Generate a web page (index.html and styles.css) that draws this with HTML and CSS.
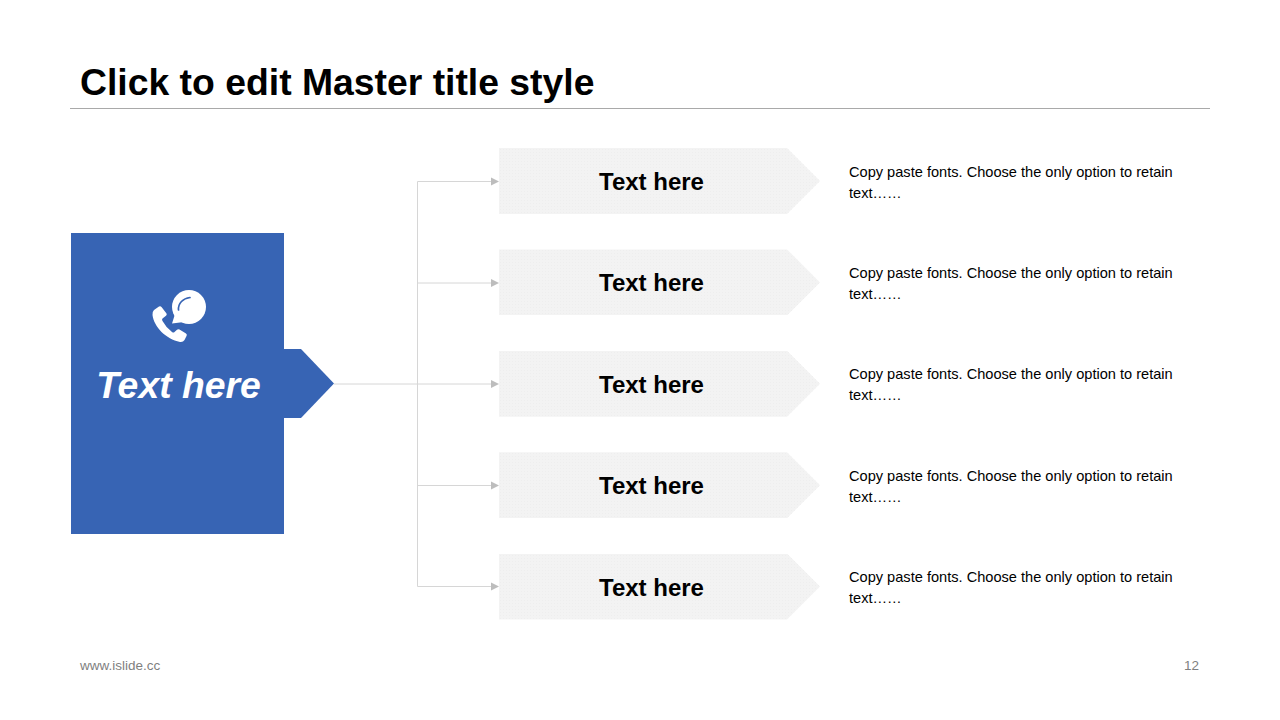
FILE: index.html
```html
<!DOCTYPE html>
<html lang="en">
<head>
<meta charset="utf-8">
<title>Click to edit Master title style</title>
<link rel="stylesheet" href="styles.css">
</head>
<body>
<div class="slide">
  <header class="header"><h1 class="title">Click to edit Master title style</h1></header>
  <main class="main">
    <section class="lead">
      <div class="lead-card">
        <svg class="lead-icon" width="58" height="58" viewBox="0 0 58 58" aria-hidden="true">
          <circle class="icon-fill" cx="39" cy="18" r="17"/>
          <polygon class="icon-fill" points="25,25 22,34.5 34,33"/>
          <path class="icon-arc" d="M28.500 21C28 14 33 9.500 40 8.500"/>
          <path class="icon-fill" d="M4 21L9 17.500Q10.500 16.700 11.500 18L16.500 24.500Q17.200 25.700 16 26.700L12.500 29.500Q11.500 30.500 12.500 32Q16 38.500 22 43Q23.500 44.200 24.500 43L27 40.800Q28.200 39.800 29.500 40.600L36 44.500Q37.500 45.500 36.500 47L34.500 51Q33 53.500 30 53C16 50 4 38 2.500 26Q2.300 22.500 4 21Z"/>
        </svg>
        <div class="lead-text">Text here</div>
      </div>
      <div class="lead-tab"></div>
    </section>
    <svg class="connector" width="165" height="472" viewBox="0 0 165 472" aria-hidden="true">
      <path class="connector-line" d="M83.500 33.500V438.500M83.500 33.500H158M83.500 135H158M0 236H158M83.500 337.500H158M83.500 438.500H158"/>
      <polygon class="connector-head" points="157,29.500 165,33.500 157,37.500"/>
      <polygon class="connector-head" points="157,131 165,135 157,139"/>
      <polygon class="connector-head" points="157,232 165,236 157,240"/>
      <polygon class="connector-head" points="157,333.500 165,337.500 157,341.500"/>
      <polygon class="connector-head" points="157,434.500 165,438.500 157,442.500"/>
    </svg>
    <div class="rows">
      <div class="row"><div class="chevron">Text here</div><p class="desc">Copy paste fonts. Choose the only option to retain text……</p></div>
      <div class="row"><div class="chevron">Text here</div><p class="desc">Copy paste fonts. Choose the only option to retain text……</p></div>
      <div class="row"><div class="chevron">Text here</div><p class="desc">Copy paste fonts. Choose the only option to retain text……</p></div>
      <div class="row"><div class="chevron">Text here</div><p class="desc">Copy paste fonts. Choose the only option to retain text……</p></div>
      <div class="row"><div class="chevron">Text here</div><p class="desc">Copy paste fonts. Choose the only option to retain text……</p></div>
    </div>
  </main>
  <footer class="footer"><span>www.islide.cc</span><span>12</span></footer>
</div>
</body>
</html>
```
FILE: styles.css
```css
* { box-sizing: border-box; }
html, body { margin: 0; padding: 0; background: #fff; }
body { font-family: "Liberation Sans", Arial, sans-serif; color: #000; }
.slide { width: 1280px; height: 720px; padding: 0 70px; display: flex; flex-direction: column; overflow: hidden; }
.header { height: 109px; border-bottom: 1px solid #a9a9a9; padding: 61px 0 0 10px; }
.title { margin: 0; font-size: 37.33px; line-height: 43px; font-weight: 700; }
.main { margin-top: 39px; height: 472px; display: flex; align-items: center; }
.lead { display: flex; align-items: center; width: 264px; flex: none; margin-top: -1px; }
.lead-card { width: 213px; height: 301px; margin-left: 1px; flex: none; background: #3764b4; display: flex; flex-direction: column; align-items: center; padding-top: 56px; }
.lead-icon { display: block; margin-left: 3px; }
.icon-fill { fill: #fff; }
.icon-arc { fill: none; stroke: #3764b4; stroke-width: 1.7; stroke-linecap: round; }
.lead-text { margin-top: 15px; margin-left: 2px; white-space: nowrap; color: #fff; font-size: 37.33px; line-height: 46px; font-weight: 700; font-style: italic; }
.lead-tab { width: 50px; height: 69px; flex: none; background: #3764b4; clip-path: polygon(0 0, 17px 0, 100% 50%, 17px 100%, 0 100%); }
.connector { flex: none; display: block; }
.connector-line { fill: none; stroke: #d6d6d6; stroke-width: 1; }
.connector-head { fill: #bdbdbd; }
.rows { flex: none; height: 471.5px; margin-bottom: 0.5px; display: flex; flex-direction: column; justify-content: space-between; }
.row { height: 66px; display: flex; align-items: center; }
.chevron { width: 321px; height: 66px; flex: none; padding: 2px 16px 0 0; display: flex; align-items: center; justify-content: center; font-size: 24px; font-weight: 700; background-color: #f3f3f3; background-image: radial-gradient(#eeeeee 0.6px, transparent 0.7px); background-size: 3px 3px; clip-path: polygon(0 0, 288px 0, 100% 50%, 288px 100%, 0 100%); }
.desc { width: 335px; margin: 0 0 0 29px; padding-top: 3px; font-size: 14.6px; line-height: 21px; }
.footer { margin-top: 38px; padding: 0 11px 0 10px; display: flex; justify-content: space-between; font-size: 13.5px; line-height: 16px; color: #7f7f7f; }
```
